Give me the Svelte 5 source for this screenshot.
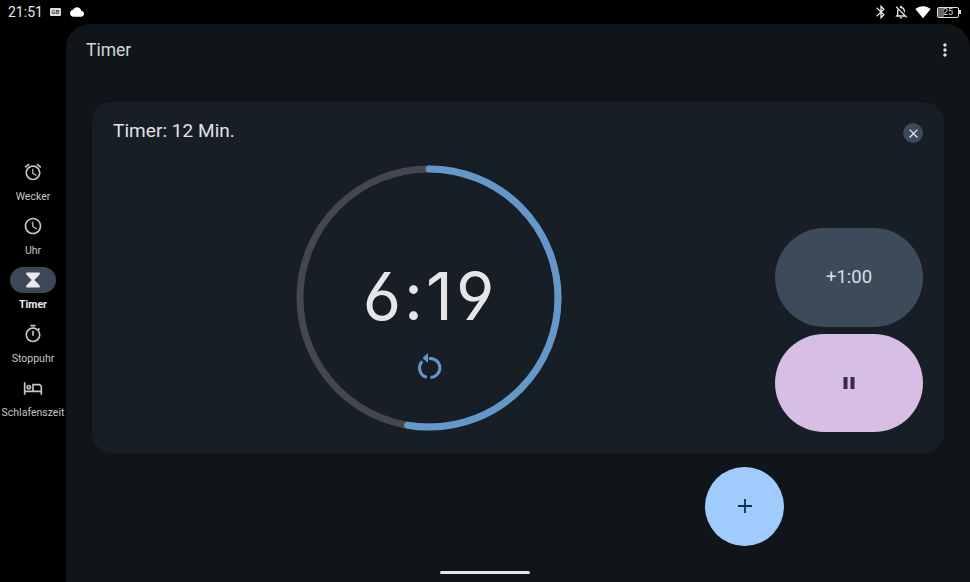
<script>
	const tabs = [
		{ label: 'Wecker', path: 'M22 5.72l-4.6-3.86-1.29 1.53 4.6 3.86L22 5.72zM7.88 3.39L6.6 1.86 2 5.71l1.29 1.53 4.59-3.85zM12.5 8H11v6l4.75 2.85.75-1.23-4-2.37V8zM12 4c-4.97 0-9 4.03-9 9s4.03 9 9 9 9-4.03 9-9-4.03-9-9-9zm0 16c-3.87 0-7-3.13-7-7s3.13-7 7-7 7 3.13 7 7-3.13 7-7 7z' },
		{ label: 'Uhr', path: 'M11.99 2C6.47 2 2 6.48 2 12s4.47 10 9.99 10C17.52 22 22 17.52 22 12S17.52 2 11.99 2zM12 20c-4.42 0-8-3.58-8-8s3.58-8 8-8 8 3.58 8 8-3.58 8-8 8zm.5-13H11v6l5.25 3.15.75-1.23-4.5-2.67z' },
		{ label: 'Timer', active: true, path: 'M4 3h16v3h-1.2v1L13.5 12l5.3 5v1H20v3H4v-3h1.2v-1l5.3-5L5.2 7V6H4z' },
		{ label: 'Stoppuhr', path: 'M15 1H9v2h6V1zm-4 13h2V8h-2v6zm8.03-6.61l1.42-1.42c-.43-.51-.9-.99-1.41-1.41l-1.42 1.42C16.07 4.74 14.12 4 12 4c-4.97 0-9 4.03-9 9s4.02 9 9 9 9-4.03 9-9c0-2.12-.74-4.07-1.97-5.61zM12 20c-3.87 0-7-3.13-7-7s3.13-7 7-7 7 3.13 7 7-3.13 7-7 7z' },
		{ label: 'Schlafenszeit', path: 'M7 14c1.66 0 3-1.34 3-3S8.66 8 7 8s-3 1.34-3 3 1.34 3 3 3zm0-4c.55 0 1 .45 1 1s-.45 1-1 1-1-.45-1-1 .45-1 1-1zm12-3h-8v8H3V5H1v15h2v-3h18v3h2v-9c0-2.21-1.79-4-4-4zm2 8h-8V9h6c1.1 0 2 .9 2 2v4z' }
	];

	const total = 12 * 60;
	const left = 6 * 60 + 19;
	const radius = 129;
	const circumference = 2 * Math.PI * radius;
	const progress = (left / total) * circumference;

	const time = `${Math.floor(left / 60)}:${String(left % 60).padStart(2, '0')}`;
</script>

<div class="screen">
	<div class="status">
		<span class="clock">21:51</span>
		<span class="gb">GB</span>
		<svg class="cloud" viewBox="0 0 24 24" width="14" height="14"><path fill="#fff" d="M19.35 10.04C18.67 6.59 15.64 4 12 4 9.11 4 6.6 5.64 5.35 8.04 2.34 8.36 0 10.91 0 14c0 3.31 2.69 6 6 6h13c2.76 0 5-2.24 5-5 0-2.64-2.05-4.78-4.65-4.96z" /></svg>
		<div class="status-right">
			<svg class="bt" viewBox="0 0 24 24" width="16" height="16"><path fill="#e6e6e6" d="M17.71 7.71L12 2h-1v7.59L6.41 5 5 6.41 10.59 12 5 17.59 6.41 19 11 14.41V22h1l5.71-5.71-4.3-4.29 4.3-4.29zM13 5.83l1.88 1.88L13 9.59V5.83zm1.88 10.46L13 18.17v-3.76l1.88 1.88z" /></svg>
			<svg viewBox="0 0 24 24" width="16" height="16"><path fill="#e6e6e6" d="M12 22c1.1 0 2-.9 2-2h-4c0 1.1.9 2 2 2zm0-15.5c2.49 0 4 2.02 4 4.5v.1l2 2V11c0-3.07-1.63-5.64-4.5-6.32V4c0-.83-.67-1.5-1.5-1.5s-1.5.67-1.5 1.5v.68c-.24.06-.47.15-.69.23l1.64 1.64c.18-.02.36-.05.55-.05zM5.41 3.35L4 4.76l2.81 2.81C6.29 8.57 6 9.74 6 11v5l-2 2v1h14.24l1.74 1.74 1.41-1.41L5.41 3.35zM16 17H8v-6c0-.68.12-1.32.34-1.9L16 16.76V17z" /></svg>
			<svg viewBox="0 0 24 24" width="16" height="16"><path fill="#fff" d="M12 21.5 0.5 7.5C3.5 4.9 7.5 3.2 12 3.2s8.5 1.7 11.5 4.3z" /></svg>
			<span class="battery"><span class="level">25</span></span>
		</div>
	</div>

	<div class="body">
		<nav class="rail">
			{#each tabs as tab}
				<div class="tab" class:active={tab.active}>
					<span class="pill">
						<svg viewBox="0 0 24 24" width="20" height="20"><path fill="currentColor" d={tab.path} /></svg>
					</span>
					<span class="label">{tab.label}</span>
				</div>
			{/each}
		</nav>

		<main class="main">
			<header class="top">
				<h1>Timer</h1>
				<svg viewBox="0 0 24 24" width="20" height="20"><path fill="#e2e2e6" d="M12 8c1.1 0 2-.9 2-2s-.9-2-2-2-2 .9-2 2 .9 2 2 2zm0 2c-1.1 0-2 .9-2 2s.9 2 2 2 2-.9 2-2-.9-2-2-2zm0 6c-1.1 0-2 .9-2 2s.9 2 2 2 2-.9 2-2-.9-2-2-2z" /></svg>
			</header>

			<section class="card">
				<div class="card-head">
					<h2>Timer: 12 Min.</h2>
					<button class="close" aria-label="Schließen">
						<svg viewBox="0 0 24 24" width="15" height="15"><path fill="#dfe5ee" d="M19 6.41 17.59 5 12 10.59 6.41 5 5 6.41 10.59 12 5 17.59 6.41 19 12 13.41 17.59 19 19 17.59 13.41 12z" /></svg>
					</button>
				</div>

				<div class="card-body">
					<div class="ring">
						<svg viewBox="0 0 266 266" width="266" height="266">
							<circle class="track" cx="133" cy="133" r={radius} />
							<circle class="bar" cx="133" cy="133" r={radius} stroke-dasharray="{progress} {circumference}" transform="rotate(-90 133 133)" />
						</svg>
						<div class="readout">
							<span class="time">{time}</span>
							<svg class="reset" viewBox="0 0 26 26" width="26" height="26">
								<path d="M13 5.5A9.5 9.5 0 1 1 14.5 24.4M10.8 24.2A9.5 9.5 0 0 1 6.3 8.3" />
								<path class="head" d="M12 0 6.5 5 12 10z" />
							</svg>
						</div>
					</div>

					<div class="actions">
						<button class="add">+1:00</button>
						<button class="pause" aria-label="Pause">
							<svg viewBox="0 0 14 14" width="14" height="14"><path fill="#3b2948" d="M1.5 1h4v12h-4zM8.5 1h4v12h-4z" /></svg>
						</button>
					</div>
				</div>
			</section>

			<button class="fab" aria-label="Timer hinzufügen">
				<svg viewBox="0 0 16 16" width="16" height="16"><path fill="#06324f" d="M7.1 1h1.8v6.1H15v1.8H8.9V15H7.1V8.9H1V7.1h6.1z" /></svg>
			</button>
		</main>
	</div>

	<div class="gesture"></div>
</div>

<style>
	:global(body) {
		background: #000;
	}

	.screen {
		position: relative;
		width: 970px;
		height: 582px;
		overflow: hidden;
		background: #000;
		font-family: Roboto, "Liberation Sans", sans-serif;
		color: #e2e2e6;
		display: flex;
		flex-direction: column;
	}

	.status {
		height: 24px;
		padding: 0 9px 0 8px;
		display: flex;
		align-items: center;
		color: #fff;
		flex: none;
	}

	.clock {
		width: 34px;
		font-size: 14px;
		color: #e8e8e8;
		white-space: nowrap;
	}

	.gb {
		margin-left: 8px;
		width: 11px;
		height: 8px;
		background: #ddd;
		border-radius: 1px;
		color: #000;
		font-size: 6px;
		line-height: 8px;
		text-align: center;
		overflow: hidden;
	}

	.cloud {
		margin-left: 9px;
	}

	.status-right {
		margin-left: auto;
		display: flex;
		align-items: center;
		gap: 6px;
	}

	.bt {
		margin-right: -2px;
	}

	.battery {
		position: relative;
		width: 20px;
		height: 9px;
		border: 1px solid #ddd;
		border-radius: 2px;
		display: block;
		margin-right: 2px;
	}

	.battery::after {
		content: '';
		position: absolute;
		right: -3px;
		top: 2px;
		width: 2px;
		height: 4px;
		background: #ddd;
	}

	.level {
		display: block;
		font-size: 9px;
		line-height: 9px;
		text-align: center;
		color: #ddd;
		background: linear-gradient(90deg, #666 30%, transparent 30%);
	}

	.body {
		flex: 1;
		display: flex;
		min-height: 0;
	}

	.rail {
		width: 66px;
		flex: none;
		padding-top: 135px;
		box-sizing: border-box;
	}

	.tab {
		height: 54px;
		display: flex;
		flex-direction: column;
		align-items: center;
		color: #c4c6cc;
	}

	.pill {
		width: 46px;
		height: 26px;
		border-radius: 13px;
		display: flex;
		align-items: center;
		justify-content: center;
		flex: none;
	}

	.label {
		margin-top: 5px;
		font-size: 10.5px;
		line-height: 14px;
		white-space: nowrap;
	}

	.tab.active {
		color: #e8eaf0;
	}

	.tab.active .pill {
		background: #3c4858;
	}

	.tab.active .label {
		font-weight: 700;
	}

	.main {
		flex: 1;
		min-width: 0;
		background: #0f1518;
		border-radius: 24px 24px 0 0;
		display: flex;
		flex-direction: column;
	}

	.top {
		height: 78px;
		padding: 15px 15px 0 20px;
		box-sizing: border-box;
		display: flex;
		justify-content: space-between;
		align-items: flex-start;
		flex: none;
	}

	h1 {
		margin: 0;
		font-size: 17.5px;
		font-weight: 400;
		line-height: 22px;
		color: #d5d7dc;
	}

	.top svg {
		margin-top: 1px;
	}

	.card {
		margin: 0 26px;
		height: 351px;
		flex: none;
		background: #171e26;
		border-radius: 20px;
		padding: 18px 21px 0;
		box-sizing: border-box;
	}

	.card-head {
		display: flex;
		justify-content: space-between;
		height: 44.5px;
	}

	h2 {
		margin: 0;
		font-size: 19px;
		font-weight: 400;
		line-height: 22px;
		letter-spacing: 0.05px;
		color: #e2e2e6;
	}

	button {
		border: none;
		padding: 0;
		font-family: inherit;
		cursor: pointer;
		display: flex;
		align-items: center;
		justify-content: center;
	}

	.close {
		width: 20px;
		height: 20px;
		border-radius: 50%;
		background: #3d4a5a;
		margin-top: 3px;
	}

	.card-body {
		display: flex;
		align-items: flex-start;
	}

	.ring {
		position: relative;
		width: 266px;
		height: 266px;
		margin-left: 182.5px;
		flex: none;
	}

	.ring > svg {
		display: block;
	}

	.track,
	.bar {
		fill: none;
		stroke-width: 7;
	}

	.track {
		stroke: #43474e;
	}

	.bar {
		stroke: #6498c9;
		stroke-linecap: round;
	}

	.readout {
		position: absolute;
		inset: 0;
		display: flex;
		flex-direction: column;
		align-items: center;
	}

	.time {
		margin-top: 91px;
		padding-left: 3px;
		font-family: Inter, sans-serif;
		font-feature-settings: "ss01";
		font-weight: 400;
		font-size: 66px;
		letter-spacing: 3px;
		line-height: 80px;
		color: #e6e6e8;
	}

	.reset {
		margin-top: 17.5px;
	}

	.reset path {
		fill: none;
		stroke: #6498c9;
		stroke-width: 3;
	}

	.reset .head {
		fill: #6498c9;
		stroke: none;
	}

	.actions {
		margin-left: 213.5px;
		padding-top: 63.5px;
		display: flex;
		flex-direction: column;
		gap: 7px;
	}

	.actions button {
		width: 148px;
		height: 98.5px;
		border-radius: 50px;
	}

	.add {
		background: #3d4a5a;
		color: #d8dfe8;
		font-size: 18.5px;
	}

	.pause {
		background: #d6bee4;
	}

	.fab {
		margin: 13.5px 0 0 639px;
		width: 79px;
		height: 79px;
		border-radius: 50%;
		background: #a0cbfd;
	}

	.gesture {
		position: absolute;
		left: 440px;
		bottom: 8px;
		width: 90px;
		height: 3px;
		border-radius: 2px;
		background: #e6e6e6;
	}
</style>
